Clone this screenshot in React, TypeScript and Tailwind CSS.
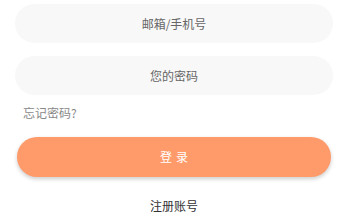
export default function App() {
  return (
    <div
      className="w-[344px] h-[218px] bg-white pl-[15px] pr-[11px] pt-[4px]"
      style={{ fontFamily: '"Noto Sans CJK SC", "Noto Sans", sans-serif' }}
    >
      <input
        className="block w-full h-[39px] rounded-full bg-[#f8f8f8] text-center text-[12px] text-[#555] placeholder:text-[#666] outline-none"
        placeholder="邮箱/手机号"
      />
      <input
        type="password"
        className="block w-full h-[39px] mt-[13px] rounded-full bg-[#f8f8f8] text-center text-[12px] text-[#555] placeholder:text-[#666] outline-none"
        placeholder="您的密码"
      />
      <div className="mt-[10px] pl-[8px] text-[12px] leading-[16px] text-[#888]">忘记密码?</div>
      <button className="block mt-[16px] mx-[2px] w-[314px] h-[40px] rounded-full bg-[#ff9a6a] text-white text-[12px] tracking-[4px] pl-[4px] shadow-[0_2px_4px_rgba(0,0,0,0.2)]">
        登录
      </button>
      <div className="mt-[21px] text-center text-[12px] leading-[16px] text-[#333]">注册账号</div>
    </div>
  );
}
